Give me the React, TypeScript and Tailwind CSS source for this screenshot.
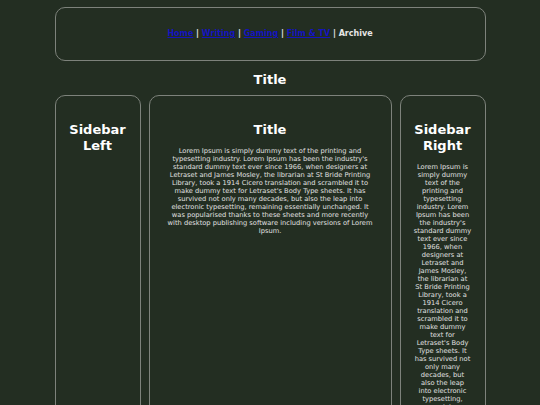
import React from "react";

const LOREM =
  "Lorem Ipsum is simply dummy text of the printing and typesetting industry. Lorem Ipsum has been the industry's standard dummy text ever since 1966, when designers at Letraset and James Mosley, the librarian at St Bride Printing Library, took a 1914 Cicero translation and scrambled it to make dummy text for Letraset's Body Type sheets. It has survived not only many decades, but also the leap into electronic typesetting, remaining essentially unchanged. It was popularised thanks to these sheets and more recently with desktop publishing software including versions of Lorem Ipsum.";

export default function App() {
  const font = { fontFamily: '"DejaVu Sans", Verdana, sans-serif' };
  return (
    <div className="min-h-screen bg-[#232e22] overflow-hidden" style={font}>
      <div className="w-[431px] mx-auto pt-[7px]">
        <nav className="h-[54px] border-[1.5px] border-[#7d827b] rounded-[10px] flex items-center justify-center text-[8px] font-bold text-[#e6e6e6]">
          <a href="#" className="text-[#1414bf] underline">Home</a>
          <span>&nbsp;|&nbsp;</span>
          <a href="#" className="text-[#1414bf] underline">Writing</a>
          <span>&nbsp;|&nbsp;</span>
          <a href="#" className="text-[#1414bf] underline">Gaming</a>
          <span>&nbsp;|&nbsp;</span>
          <a href="#" className="text-[#1414bf] underline">Film &amp; TV</a>
          <span>&nbsp;|&nbsp;</span>
          <span>Archive</span>
        </nav>
        <h1 className="mt-[11px] mb-[7px] text-center text-[13px] leading-[16px] font-bold text-white">Title</h1>
        <div className="flex gap-2 items-stretch">
          <aside className="w-[86px] shrink-0 border-[1.5px] border-[#7d827b] rounded-[10px] pt-[26px] px-[6px] min-h-[420px]">
            <h2 className="text-center text-[13px] leading-[16px] font-bold text-white">Sidebar Left</h2>
          </aside>
          <main className="flex-1 border-[1.5px] border-[#7d827b] rounded-[10px] pt-[26px] px-[15px]">
            <h2 className="text-center text-[13px] leading-[16px] font-bold text-white">Title</h2>
            <p className="mt-[9px] text-center text-[6.7px] leading-[8px] text-[#e0e0e0]">{LOREM}</p>
          </main>
          <aside className="w-[86px] shrink-0 border-[1.5px] border-[#7d827b] rounded-[10px] pt-[26px] px-[13.25px]">
            <h2 className="text-center text-[13px] leading-[16px] font-bold text-white">Sidebar Right</h2>
            <p className="mt-[9px] text-center text-[6.7px] leading-[8px] text-[#e0e0e0]">{LOREM}</p>
          </aside>
        </div>
      </div>
    </div>
  );
}
